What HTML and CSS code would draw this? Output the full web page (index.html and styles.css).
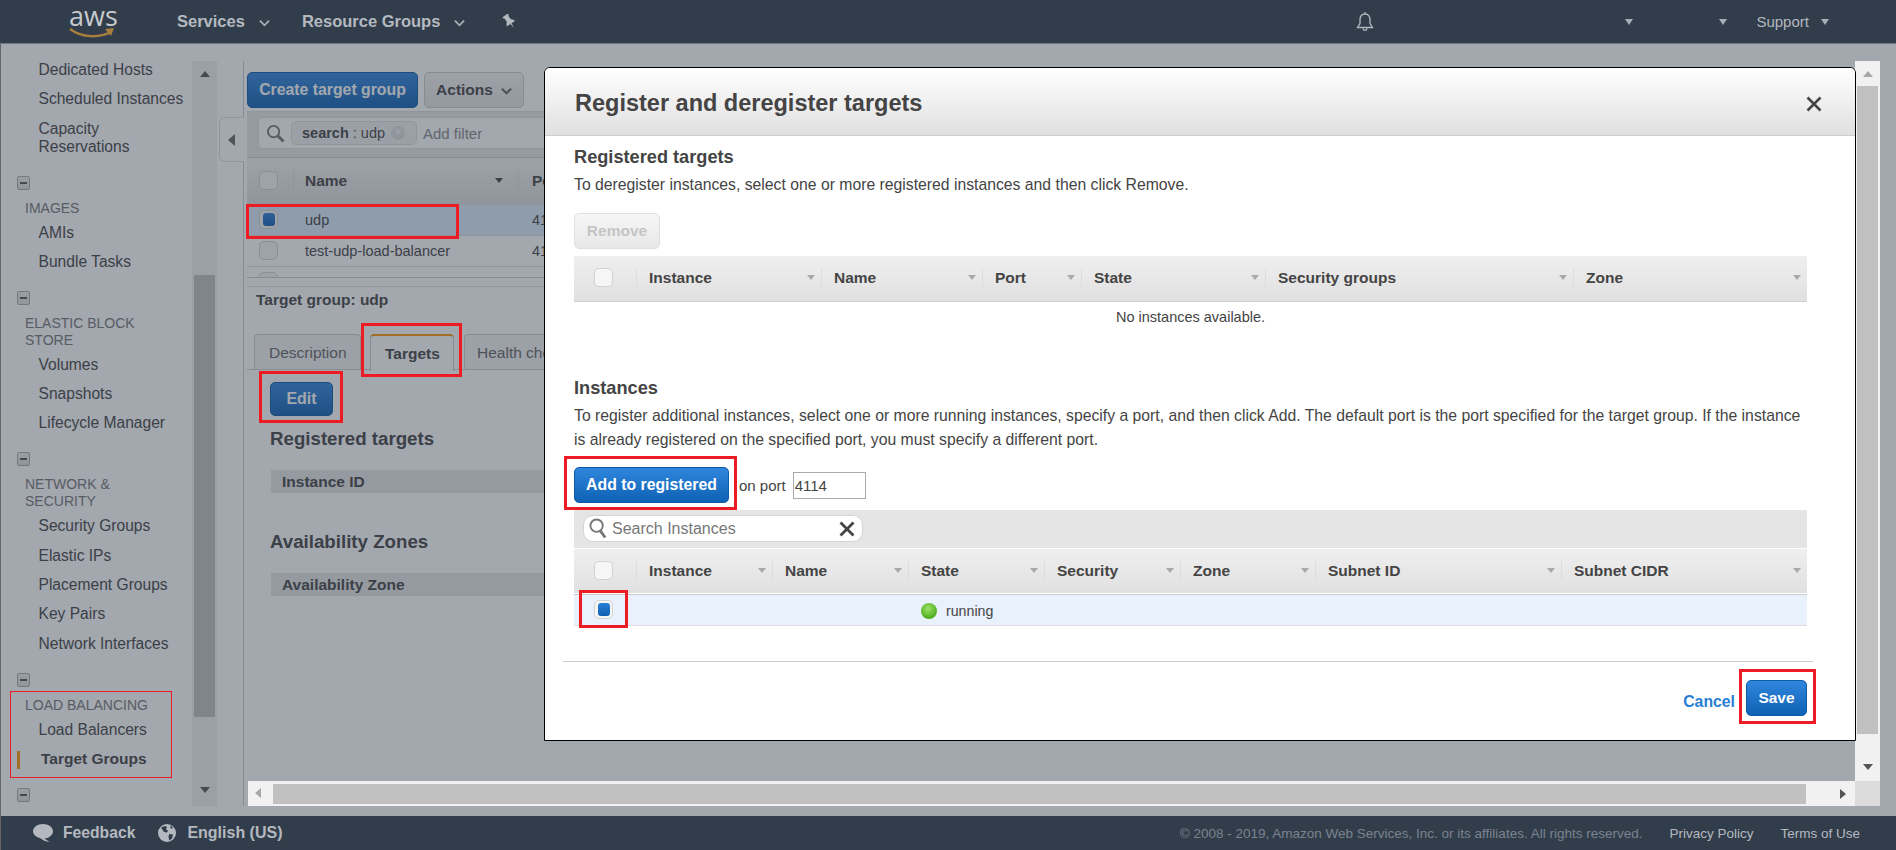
FILE: index.html
```html
<!DOCTYPE html>
<html lang="en">
<head>
<meta charset="UTF-8">
<meta name="viewport" content="width=device-width, initial-scale=1.0">
<title>Target Groups</title>
<link rel="stylesheet" href="styles.css">
</head>
<body>

<header class="topbar">
  <div class="logo">
    <span class="logo-text">aws</span>
    <svg class="logo-smile" viewBox="0 0 46 12"><path d="M1 2c12 9 29 9 41 3" fill="none" stroke="#a87f3d" stroke-width="2.4"/><path d="M36 2l9-1-3 8z" fill="#a87f3d"/></svg>
  </div>
  <a class="nav-link nav-services">Services<svg class="chev" viewBox="0 0 12 8"><path d="M1 1.5l5 5 5-5" fill="none" stroke="#a7adb5" stroke-width="2"/></svg></a>
  <a class="nav-link nav-groups">Resource Groups<svg class="chev" viewBox="0 0 12 8"><path d="M1 1.5l5 5 5-5" fill="none" stroke="#a7adb5" stroke-width="2"/></svg></a>
  <svg class="pin" viewBox="0 0 16 16"><g transform="rotate(-35 8 8)" fill="#b4b9c0"><path d="M4.500 0h7v1.500l-1 .7v4.300l2.500 3v1.300H3v-1.300l2.500-3V2.200l-1-.7z"/><path d="M7.200 10.500h1.600L8 16.500z"/></g></svg>
  <svg class="bell" viewBox="0 0 18 20"><path d="M9 2c-3.500 0-5 2.800-5 6v3.500L1.500 15.500h15L14 11.500V8c0-3.200-1.500-6-5-6zM9 0v2M7 16.500c.3 2.600 3.700 2.600 4 0" fill="none" stroke="#b4b9c0" stroke-width="1.300"/></svg>
  <i class="tri-down tri-account"></i>
  <i class="tri-down tri-region"></i>
  <a class="support">Support<i class="tri-down"></i></a>
</header>

<div class="workspace">
  <div class="layout">
    <nav class="sidenav">
      <a class="nav-item">Dedicated Hosts</a>
      <a class="nav-item">Scheduled Instances</a>
      <a class="nav-item">Capacity<br>Reservations</a>

      <span class="minus-box"></span>
      <div class="nav-label">IMAGES</div>
      <a class="nav-item">AMIs</a>
      <a class="nav-item">Bundle Tasks</a>

      <span class="minus-box"></span>
      <div class="nav-label">ELASTIC BLOCK<br>STORE</div>
      <a class="nav-item">Volumes</a>
      <a class="nav-item">Snapshots</a>
      <a class="nav-item">Lifecycle Manager</a>

      <span class="minus-box"></span>
      <div class="nav-label">NETWORK &amp;<br>SECURITY</div>
      <a class="nav-item">Security Groups</a>
      <a class="nav-item">Elastic IPs</a>
      <a class="nav-item">Placement Groups</a>
      <a class="nav-item">Key Pairs</a>
      <a class="nav-item">Network Interfaces</a>

      <span class="minus-box"></span>
      <div class="nav-label">LOAD BALANCING</div>
      <a class="nav-item">Load Balancers</a>
      <a class="nav-item nav-item-active">Target Groups</a>

      <span class="minus-box"></span>
    </nav>

    <div class="nav-scroll">
      <i class="tri-up"></i>
      <div class="nav-scroll-thumb"></div>
      <i class="tri-down-lg"></i>
    </div>

    <div class="collapse-col">
      <div class="collapse-handle"><i class="tri-left"></i></div>
    </div>

    <main class="pane">
      <div class="toolbar">
        <button class="btn btn-primary btn-create">Create target group</button>
        <button class="btn btn-actions">Actions<svg class="chev" viewBox="0 0 12 8"><path d="M1 1.500l5 5 5-5" fill="none" stroke="#666" stroke-width="2.400"/></svg></button>
      </div>

      <div class="filter-bar">
        <div class="filter-box">
          <svg class="search-icon" viewBox="0 0 20 20"><circle cx="8" cy="8" r="6" fill="none" stroke="#777" stroke-width="2"/><path d="M12.500 12.500l6 6" stroke="#777" stroke-width="3"/></svg>
          <span class="chip"><b>search</b> : udp<span class="chip-x">&#215;</span></span>
          <span class="filter-hint">Add filter</span>
        </div>
      </div>

      <div class="list">
        <div class="list-head">
          <span class="check-cell"><span class="check"></span></span>
          <span class="list-name"><b>Name</b><i class="tri-down-sm"></i></span>
          <b class="list-port">Port</b>
        </div>
        <div class="list-row list-row-on">
          <span class="check-cell"><span class="check check-on"></span></span>
          <span class="list-name">udp</span>
          <span class="list-port">4114</span>
        </div>
        <div class="list-row">
          <span class="check-cell"><span class="check"></span></span>
          <span class="list-name">test-udp-load-balancer</span>
          <span class="list-port">4114</span>
        </div>
        <div class="list-row">
          <span class="check-cell"><span class="check"></span></span>
        </div>
      </div>

      <div class="splitter"></div>
      <div class="detail-title">Target group: udp</div>

      <div class="tabs">
        <span class="tab">Description</span>
        <span class="tab tab-on">Targets</span>
        <span class="tab tab-health">Health checks</span>
      </div>

      <div class="tab-body">
        <button class="btn btn-primary btn-edit">Edit</button>
        <h3 class="section-title">Registered targets</h3>
        <div class="bar">Instance ID</div>
        <h3 class="section-title section-title-low">Availability Zones</h3>
        <div class="bar">Availability Zone</div>
      </div>
    </main>

    <div class="vscroll">
      <i class="tri-up"></i>
      <div class="vscroll-thumb"></div>
      <i class="tri-down-lg"></i>
    </div>

    <div class="hscroll">
      <i class="tri-left-sm"></i>
      <div class="hscroll-thumb"></div>
      <i class="tri-right-sm"></i>
    </div>
    <div class="scroll-corner"></div>
  </div>
  <div class="dim"></div>
</div>

<footer class="footer">
  <svg class="foot-bubble" viewBox="0 0 20 18"><path d="M10 0c5.500 0 10 3.200 10 7.300 0 4-4.500 7.200-8.500 7.200l5 3.500c-4-.5-7-1.800-9-3.700C3.500 13.300 0 10.700 0 7.300 0 3.200 4.500 0 10 0z" fill="#b4b9c0"/></svg>
  <b class="foot-link">Feedback</b>
  <svg class="foot-globe" viewBox="0 0 18 18"><circle cx="9" cy="9" r="9" fill="#b4b9c0"/><path d="M3 3.500l4-1.500 2 1-1 2 2 2-1 1.500-3-.5-2-3zM11 10l4 .5-1 4-2.500 2-1-3zM12 1.500l3 2-2 1.500z" fill="#323d4b"/></svg>
  <b class="foot-link foot-lang">English (US)</b>
  <span class="copyright">&copy; 2008 - 2019, Amazon Web Services, Inc. or its affiliates. All rights reserved.</span>
  <a class="legal">Privacy Policy</a>
  <a class="legal">Terms of Use</a>
</footer>

<section class="modal">
  <div class="modal-head">
    <h2 class="modal-title">Register and deregister targets</h2>
    <svg class="modal-close" viewBox="0 0 16 16"><path d="M1.500 1.500l13 13M14.500 1.500l-13 13" stroke="#444" stroke-width="2.600"/></svg>
  </div>

  <div class="modal-body">
    <h3 class="modal-h3">Registered targets</h3>
    <p class="modal-text">To deregister instances, select one or more registered instances and then click Remove.</p>
    <button class="btn btn-disabled">Remove</button>

    <div class="grid-head grid-registered">
      <span class="cell-check"><span class="check"></span></span>
      <span class="cell"><b>Instance</b><i class="tri-down-sm"></i></span>
      <span class="cell"><b>Name</b><i class="tri-down-sm"></i></span>
      <span class="cell"><b>Port</b><i class="tri-down-sm"></i></span>
      <span class="cell"><b>State</b><i class="tri-down-sm"></i></span>
      <span class="cell"><b>Security groups</b><i class="tri-down-sm"></i></span>
      <span class="cell cell-last"><b>Zone</b><i class="tri-down-sm"></i></span>
    </div>
    <div class="no-rows">No instances available.</div>

    <h3 class="modal-h3 modal-h3-low">Instances</h3>
    <p class="modal-text modal-text-wide">To register additional instances, select one or more running instances, specify a port, and then click Add. The default port is the port specified for the target group. If the instance is already registered on the specified port, you must specify a different port.</p>

    <div class="add-row">
      <button class="btn btn-primary btn-add">Add to registered</button>
      <span class="add-label">on port</span>
      <input class="port-input" type="text" value="4114">
    </div>

    <div class="search-band">
      <div class="search-pill">
        <svg class="pill-icon" viewBox="0 0 20 22"><circle cx="8" cy="8" r="6.500" fill="none" stroke="#777" stroke-width="2"/><path d="M12 13.500l5 7" stroke="#777" stroke-width="3"/></svg>
        <span class="pill-text">Search Instances</span>
        <svg class="pill-x" viewBox="0 0 16 16"><path d="M1.500 1.500l13 13M14.500 1.500l-13 13" stroke="#444" stroke-width="2.800"/></svg>
      </div>
    </div>

    <div class="grid-head grid-instances">
      <span class="cell-check"><span class="check"></span></span>
      <span class="cell"><b>Instance</b><i class="tri-down-sm"></i></span>
      <span class="cell"><b>Name</b><i class="tri-down-sm"></i></span>
      <span class="cell"><b>State</b><i class="tri-down-sm"></i></span>
      <span class="cell"><b>Security</b><i class="tri-down-sm"></i></span>
      <span class="cell"><b>Zone</b><i class="tri-down-sm"></i></span>
      <span class="cell"><b>Subnet ID</b><i class="tri-down-sm"></i></span>
      <span class="cell cell-last"><b>Subnet CIDR</b><i class="tri-down-sm"></i></span>
    </div>
    <div class="grid-row grid-instances">
      <span class="cell-check"><span class="check check-on"></span></span>
      <span></span>
      <span></span>
      <span class="state"><i class="dot"></i>running</span>
    </div>

    <div class="modal-foot">
      <a class="cancel">Cancel</a>
      <button class="btn btn-primary btn-save">Save</button>
    </div>
  </div>
</section>

<div class="mark mark-thin mark-nav"></div>
<div class="mark mark-row"></div>
<div class="mark mark-tab"></div>
<div class="mark mark-edit"></div>
<div class="mark mark-add"></div>
<div class="mark mark-check"></div>
<div class="mark mark-save"></div>

</body>
</html>
```

FILE: styles.css
```css
* {
  box-sizing: border-box;
}

body {
  margin: 0;
  width: 1896px;
  height: 850px;
  overflow: hidden;
  display: flex;
  flex-direction: column;
  position: relative;
  font-family: "Liberation Sans", Arial, sans-serif;
  font-size: 15px;
  color: #444;
  background: #fff;
}

button {
  font-family: inherit;
}

/* top bar */
.topbar {
  height: 44px;
  flex: none;
  display: flex;
  align-items: center;
  background: #323d4b;
  border-bottom: 1px solid #6f7783;
  color: #b4b9c0;
}

.logo {
  width: 46px;
  margin-left: 69px;
  position: relative;
  height: 30px;
  text-align: center;
}

.logo-text {
  font-family: "Open Sans", sans-serif;
  font-size: 27px;
  line-height: 24px;
  color: #c6cace;
  display: block;
  margin-top: -3px;
}

.logo-smile {
  display: block;
  width: 46px;
  height: 12px;
  margin-top: -1px;
}

.nav-link {
  font-size: 16.5px;
  font-weight: bold;
  display: flex;
  align-items: center;
}

.nav-services {
  margin-left: 62px;
}

.nav-groups {
  margin-left: 32px;
}

.chev {
  width: 11px;
  height: 8px;
  margin-left: 14px;
  margin-top: 2px;
}

.pin {
  width: 15px;
  height: 15px;
  margin-left: 37px;
}

.bell {
  width: 18px;
  height: 20px;
  margin-left: 839px;
}

.tri-down {
  display: inline-block;
  border-left: 4.5px solid transparent;
  border-right: 4.5px solid transparent;
  border-top: 6px solid #a7adb5;
}

.tri-account {
  margin-left: 251px;
}

.tri-region {
  margin-left: 86px;
}

.support {
  margin-left: 29px;
  font-size: 15px;
  display: flex;
  align-items: center;
  gap: 12px;
}

/* page under the modal */
.workspace {
  height: 772px;
  flex: none;
  position: relative;
  padding: 17px 16px 10px 0;
  background: #fff;
  border-left: 1px solid #666;
}

.dim {
  position: absolute;
  inset: 0;
  background: rgba(50, 60, 75, 0.45);
  z-index: 1;
}

.layout {
  height: 100%;
  display: grid;
  grid-template-columns: 191px 26px 26px minmax(0, 1fr) 25px;
  grid-template-rows: minmax(0, 1fr) 25px;
}

.sidenav {
  grid-row: 1 / 3;
  overflow: hidden;
}

.nav-item {
  display: block;
  line-height: 18px;
  font-size: 15.6px;
  padding-left: 37.5px;
  margin-bottom: 11.3px;
  color: #444;
}

.nav-item-active {
  font-weight: bold;
  margin-left: 16px;
  padding-left: 24px;
  position: relative;
  font-size: 15.5px;
}

.nav-item-active::before {
  content: "";
  position: absolute;
  left: 0;
  top: 1px;
  width: 3px;
  height: 18px;
  background: #ff9900;
}

.minus-box {
  display: block;
  width: 13px;
  height: 14px;
  margin: 20px 0 10px 16px;
  border: 1px solid #aaa;
  border-radius: 2px;
  background: linear-gradient(#eee, #ddd);
  position: relative;
}

.minus-box::after {
  content: "";
  position: absolute;
  left: 2px;
  right: 2px;
  top: 5px;
  height: 2px;
  background: #555;
}

.nav-label {
  font-size: 14px;
  line-height: 17px;
  padding-left: 24px;
  margin-bottom: 7px;
  color: #777;
}

.nav-scroll {
  grid-row: 1 / 3;
  background: #f0f0f0;
  display: flex;
  flex-direction: column;
  align-items: center;
  width: 25px;
}

.nav-scroll-thumb {
  width: 21px;
  height: 442px;
  margin-top: 198px;
  background: #c0c0c0;
}

.nav-scroll .tri-down-lg {
  margin-top: 70px;
}

.nav-scroll .tri-up {
  margin-top: 10px;
}

.tri-up {
  display: block;
  border-left: 5.5px solid transparent;
  border-right: 5.5px solid transparent;
  border-bottom: 6px solid #555;
}

.tri-down-lg {
  display: block;
  border-left: 5.5px solid transparent;
  border-right: 5.5px solid transparent;
  border-top: 6px solid #555;
}

.collapse-col {
  grid-row: 1 / 3;
  border-right: 1px solid #ccc;
}

.collapse-handle {
  margin-top: 56px;
  height: 45px;
  margin-left: 1px;
  margin-right: -1px;
  border: 1px solid #ddd;
  border-right: 1px solid #fff;
  border-radius: 6px 0 0 6px;
  display: flex;
  align-items: center;
  justify-content: center;
  background: #fff;
}

.tri-left {
  display: block;
  border-top: 6.5px solid transparent;
  border-bottom: 6.5px solid transparent;
  border-right: 7px solid #666;
}

/* list view */
.pane {
  overflow: hidden;
  padding-left: 3px;
}

.toolbar {
  display: flex;
  gap: 6px;
  padding-top: 11px;
  height: 50px;
}

.btn {
  height: 36px;
  border-radius: 5px;
  font-size: 15.5px;
  font-weight: bold;
  padding: 0;
  border: 1px solid #ccc;
}

.btn-primary {
  background: linear-gradient(#2f86dc, #0f62b5);
  border-color: #0d5ba6;
  color: #fff;
}

.btn-create {
  width: 171px;
  font-size: 15.8px;
}

.btn-actions {
  width: 100px;
  background: linear-gradient(#f4f4f4, #e4e4e4);
  color: #444;
  display: flex;
  align-items: center;
  justify-content: center;
}

.btn-actions .chev {
  margin-left: 8px;
}

.filter-bar {
  height: 47px;
  padding: 5px 14px 0 11px;
  border-top: 1px solid #ddd;
  border-bottom: 1px solid #ccc;
  background: #e8e8e8;
}

.filter-box {
  height: 32px;
  border: 1px solid #ddd;
  border-radius: 5px;
  background: #fff;
  display: flex;
  align-items: center;
  padding-left: 7px;
}

.search-icon {
  width: 19px;
  height: 19px;
}

.chip {
  margin-left: 6px;
  width: 126px;
  height: 24px;
  line-height: 22px;
  padding-left: 10px;
  font-size: 14.5px;
  background: #f0f0f0;
  border: 1px solid #ddd;
  border-radius: 5px;
  position: relative;
}

.chip-x {
  position: absolute;
  right: 11px;
  top: 4px;
  width: 14px;
  height: 14px;
  line-height: 13px;
  text-align: center;
  font-size: 12px;
  border-radius: 50%;
  background: #ddd;
  color: #fff;
}

.filter-hint {
  margin-left: 6px;
  font-size: 15px;
  color: #888;
}

.list {
  height: 120px;
  overflow: hidden;
  border-bottom: 1px solid #ccc;
}

.list-head,
.list-row {
  display: flex;
  align-items: center;
}

.list-head {
  height: 47px;
  padding-bottom: 2px;
  background: linear-gradient(#f4f4f4, #dedede);
  font-size: 15.5px;
}

.list-row {
  height: 31px;
  font-size: 14.5px;
  border-bottom: 1px solid #ddd;
}

.list-row-on {
  background: #dbecfa;
}

.check-cell {
  width: 47px;
  height: 20px;
  padding-left: 12px;
  border-right: 1px solid #ddd;
  flex: none;
}

.list-row .check-cell {
  border-right: 0;
}

.check {
  display: block;
  width: 19px;
  height: 19px;
  border: 1px solid #d2d2d2;
  border-radius: 5px;
  background: #f6f6f6;
  position: relative;
}

.check-on::after {
  content: "";
  position: absolute;
  left: 3px;
  top: 2px;
  right: 2px;
  bottom: 2px;
  border-radius: 3px;
  background: linear-gradient(#2a7fd4, #1060b4);
}

.list-name {
  width: 225px;
  height: 20px;
  padding: 0 15px 0 11px;
  display: flex;
  align-items: center;
  justify-content: space-between;
  border-right: 1px solid #ddd;
}

.list-row .list-name {
  border-right: 0;
}

.list-port {
  margin-left: 13px;
}

.tri-down-sm {
  display: block;
  flex: none;
  border-left: 4.5px solid transparent;
  border-right: 4.5px solid transparent;
  border-top: 5px solid #aaa;
}

.list-head .tri-down-sm {
  border-top-color: #444;
}

.splitter {
  height: 9px;
  border-bottom: 1px solid #ddd;
}

.detail-title {
  font-size: 15.5px;
  font-weight: bold;
  line-height: 18px;
  padding: 4px 0 0 9px;
  height: 47px;
}

.tabs {
  display: flex;
  height: 36px;
  padding-left: 7px;
  border-bottom: 1px solid #ccc;
}

.tab {
  width: 107px;
  padding-left: 14px;
  line-height: 36px;
  font-size: 15.5px;
  color: #666;
  background: #f2f2f2;
  border: 1px solid #ccc;
  border-bottom: 0;
  border-radius: 4px 4px 0 0;
  white-space: nowrap;
}

.tab-on {
  width: 84px;
  margin-left: 9px;
  margin-right: 10px;
  height: 37px;
  font-weight: bold;
  color: #444;
  background: #fff;
  border-top: 2px solid #ff9900;
}

.tab-health {
  width: 130px;
  padding-left: 12px;
}

.tab-body {
  padding: 12px 0 0 23px;
}

.btn-edit {
  display: block;
  width: 63px;
  height: 34px;
  font-size: 16px;
}

.section-title {
  margin: 11px 0 19px;
  font-size: 18.7px;
  line-height: 24px;
  font-weight: bold;
}

.section-title-low {
  margin-top: 37px;
}

.bar {
  height: 23px;
  margin-left: 1px;
  padding-left: 11px;
  line-height: 23px;
  font-size: 15.5px;
  font-weight: bold;
  background: #e6e6e6;
}

/* browser scrollbars */
.vscroll {
  position: relative;
  z-index: 2;
  background: #f1f1f1;
  display: flex;
  flex-direction: column;
  align-items: center;
}

.vscroll .tri-up {
  margin-top: 10px;
  border-bottom-color: #a8a8a8;
}

.vscroll-thumb {
  width: 21px;
  height: 648px;
  margin-top: 9px;
  background: #c0c0c0;
}

.vscroll .tri-down-lg {
  margin-top: 30px;
}

.hscroll {
  position: relative;
  z-index: 2;
  margin-left: 4px;
  background: #f1f1f1;
  display: flex;
  align-items: center;
  padding-left: 25px;
}

.hscroll-thumb {
  width: 1533px;
  height: 20px;
  background: #c0c0c0;
}

.tri-left-sm {
  position: absolute;
  left: 7px;
  top: 7px;
  border-top: 5.5px solid transparent;
  border-bottom: 5.5px solid transparent;
  border-right: 6px solid #a8a8a8;
}

.tri-right-sm {
  margin-left: 34px;
  border-top: 5.5px solid transparent;
  border-bottom: 5.5px solid transparent;
  border-left: 6px solid #555;
}

.scroll-corner {
  position: relative;
  z-index: 2;
  background: #dcdcdc;
}

/* footer */
.footer {
  height: 34px;
  flex: none;
  display: flex;
  align-items: center;
  padding-left: 33px;
  background: #323d4b;
  border-left: 1px solid #666;
  color: #b4b9c0;
}

.foot-bubble {
  width: 20px;
  height: 18px;
  margin-left: -1px;
}

.foot-link {
  font-size: 15.7px;
  margin-left: 10px;
}

.foot-lang {
  font-size: 16px;
  margin-left: 11px;
}

.foot-globe {
  width: 18px;
  height: 18px;
  margin-left: 23px;
}

.copyright {
  margin-left: auto;
  font-size: 13.5px;
  color: #7b838e;
}

.legal {
  font-size: 13.5px;
  color: #b4b9c0;
  margin-left: 27px;
}

.legal:last-child {
  margin-right: 36px;
}

/* modal */
.modal {
  position: absolute;
  left: 544px;
  top: 67px;
  width: 1312px;
  height: 674px;
  z-index: 3;
  background: #fff;
  border: 1px solid #000;
  border-radius: 6px 6px 0 0;
}

.modal-head {
  height: 68px;
  padding: 4px 33px 0 30px;
  display: flex;
  align-items: center;
  justify-content: space-between;
  background: linear-gradient(#fff, #e0e0e0);
  border-bottom: 1px solid #ccc;
  border-radius: 5px 5px 0 0;
}

.modal-title {
  margin: 0;
  font-size: 23.5px;
  color: #444;
}

.modal-close {
  width: 16px;
  height: 16px;
  margin-top: 1px;
}

.modal-body {
  padding: 11px 48px 0 29px;
}

.modal-h3 {
  margin: 0;
  font-size: 18.2px;
  line-height: 20px;
  color: #444;
}

.modal-h3-low {
  margin-top: 46px;
}

.modal-text {
  margin: 9px 0 0;
  font-size: 15.75px;
  line-height: 18px;
}

.modal-text-wide {
  margin-top: 6px;
  line-height: 24px;
}

.btn-disabled {
  display: block;
  width: 86px;
  margin-top: 19px;
  color: #c4c4c4;
  background: linear-gradient(#f6f6f6, #e8e8e8);
  border-color: #e0e0e0;
}

.grid-head,
.grid-row {
  display: grid;
  align-items: center;
}

.grid-registered {
  grid-template-columns: 63px 185px 161px 99px 184px 308px 1fr;
}

.grid-instances {
  grid-template-columns: 63px 136px 136px 136px 136px 135px 246px 1fr;
}

.grid-head {
  height: 46px;
  margin-top: 7px;
  padding-bottom: 2px;
  background: linear-gradient(#efefef, #e0e0e0);
  border-bottom: 1px solid #ccc;
  font-size: 15.5px;
}

.cell-check {
  height: 20px;
  padding-left: 20px;
  border-right: 1px solid #ddd;
}

.cell {
  height: 20px;
  padding: 0 6px 0 12px;
  display: flex;
  align-items: center;
  justify-content: space-between;
  border-right: 1px solid #ddd;
}

.cell-last {
  border-right: 0;
}

.no-rows {
  line-height: 30px;
  text-align: center;
  font-size: 14.5px;
}

.add-row {
  display: flex;
  align-items: center;
  margin-top: 15px;
}

.btn-add {
  width: 155px;
  font-size: 15.8px;
}

.add-label {
  margin-left: 10px;
  font-size: 15px;
}

.port-input {
  width: 73px;
  height: 27px;
  margin-left: 7px;
  padding: 0 1px;
  border: 1px solid #aaa;
  font-family: inherit;
  font-size: 15px;
  color: #444;
}

.search-band {
  height: 38px;
  margin-top: 7px;
  padding: 5px 0 0 9px;
  background: #e5e5e5;
}

.search-pill {
  width: 280px;
  height: 27px;
  display: flex;
  align-items: center;
  padding: 0 6px 0 5px;
  border: 1px solid #d4d4d4;
  border-radius: 10px;
  background: #fff;
}

.pill-icon {
  width: 19px;
  height: 21px;
  flex: none;
}

.pill-text {
  flex: 1;
  margin-left: 4px;
  font-size: 16px;
  color: #777;
}

.pill-x {
  width: 16px;
  height: 16px;
  margin-right: 1px;
}

.grid-instances.grid-head {
  margin-top: 1px;
  box-shadow: inset 0 -1px #fff;
}

.grid-row {
  height: 31px;
  background: #e9f1fc;
  border-bottom: 1px solid #ddd;
}

.grid-row .cell-check {
  border-right: 0;
}

.state {
  grid-column: 4;
  display: flex;
  align-items: center;
  font-size: 14.2px;
  padding: 2px 0 0 12px;
  white-space: nowrap;
}

.dot {
  width: 16px;
  height: 16px;
  margin-right: 9px;
  border-radius: 50%;
  background: radial-gradient(circle at 45% 35%, #9fe26a, #4cae1c 70%);
}

.modal-foot {
  margin: 35px -6px 0 -11px;
  padding: 18px 6px 0 0;
  border-top: 1px solid #ccc;
  display: flex;
  justify-content: flex-end;
  align-items: center;
  gap: 11px;
}

.cancel {
  margin-top: 8px;
  font-size: 15.8px;
  font-weight: bold;
  color: #2a7fd4;
}

.btn-save {
  width: 61px;
  font-size: 15.5px;
}

/* red annotations drawn on the screenshot */
.mark {
  position: absolute;
  z-index: 4;
  border: 3px solid #ed1c24;
}

.mark-thin {
  border-width: 1px;
}

.mark-nav {
  left: 10px;
  top: 691px;
  width: 162px;
  height: 87px;
}

.mark-row {
  left: 246px;
  top: 204px;
  width: 213px;
  height: 35px;
}

.mark-tab {
  left: 361px;
  top: 323px;
  width: 101px;
  height: 54px;
}

.mark-edit {
  left: 259px;
  top: 371px;
  width: 84px;
  height: 52px;
}

.mark-add {
  left: 564px;
  top: 456px;
  width: 173px;
  height: 54px;
}

.mark-check {
  left: 579px;
  top: 590px;
  width: 49px;
  height: 38px;
}

.mark-save {
  left: 1739px;
  top: 669px;
  width: 77px;
  height: 55px;
}
```
